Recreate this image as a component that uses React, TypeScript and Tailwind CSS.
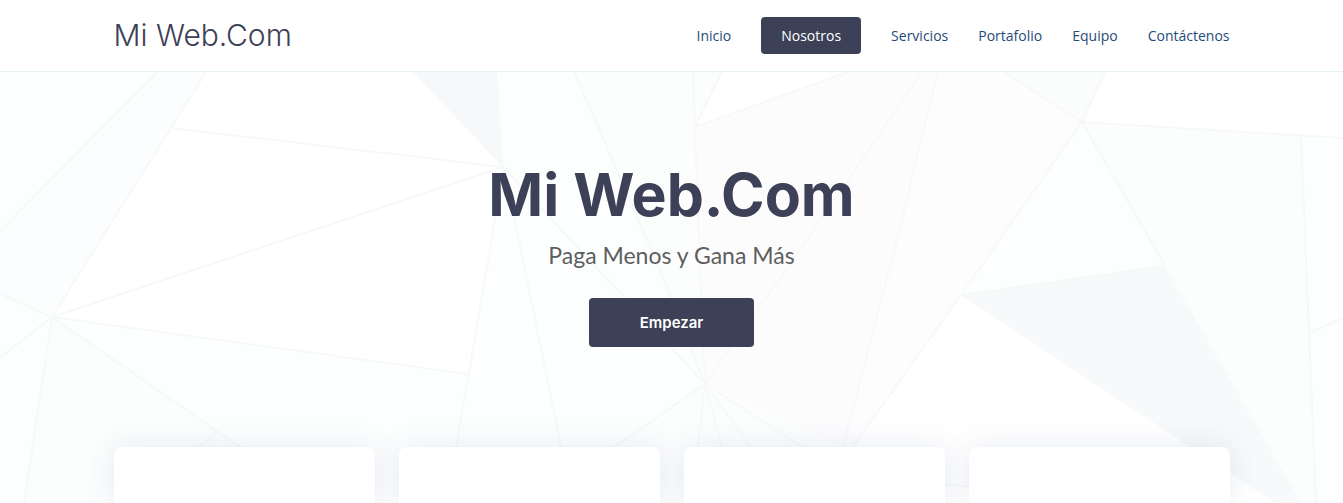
import React from "react";

const links = ["Inicio", "Nosotros", "Servicios", "Portafolio", "Equipo", "Contáctenos"];
const cards = ["uno", "dos", "tres", "cuatro"];

function PolygonBackdrop() {
  return (
    <svg
      aria-hidden="true"
      className="absolute inset-0 h-full w-full"
      viewBox="0 72 1343 431"
      preserveAspectRatio="xMidYMin slice"
    >
      <rect y="72" width="1343" height="431" fill="#fdfefe" />
      <g fill="#fcfdfd">
        <path d="M157 72H206L52 317L0 294V231Z" fill="#fcfdfe" />
        <path d="M574 72H722L695 127L705 384Z" />
        <path d="M695 127L848 72H938L843 447L705 384Z" fill="#fcfcfd" />
        <path d="M938 72H1004L1082 122L961 295L853 447H843Z" fill="#fdfdfe" />
        <path d="M1082 122L1301 135L1309 333L1316 503H1301L1165 266Z" />
        <path d="M1004 72H1105L1082 122Z" fill="#fbfcfc" />
        <path d="M52 317L240 447V503H24Z" />
        <path d="M705 384L843 447V503H561L614 447Z" />
      </g>
      <g fill="#ffffff">
        <path d="M206 72H413L503 167L171 128Z" />
        <path d="M171 128L503 167L490 250L468 374L52 317Z" />
        <path d="M695 127L722 72H848Z" />
        <path d="M1105 72H1343V138L1082 122Z" />
        <path d="M961 295L1275 503H815Z" />
      </g>
      <path d="M413 72H497L503 167Z" fill="#f7f8f9" />
      <path d="M961 295L1165 266L1301 503H1275Z" fill="#f7f9fa" />
      <g fill="none" stroke="#f7f9f9" strokeWidth="2">
        <path d="M157 72L0 231M206 72L171 128L52 317M171 128L503 167L52 317L468 374" />
        <path d="M0 294L52 317L0 358M52 317L24 503M52 317L240 447M218 432L199 447" />
        <path d="M503 167L490 250L456 447M503 167L521 250L561 447M503 167L705 384" />
        <path d="M574 72L654 255L705 384M693 72L695 127L699 250L705 384" />
        <path d="M722 72L695 127L848 72M922 72L800 250L705 384M938 72L896 244L843 447" />
        <path d="M705 384L614 447M705 384L698 447M705 384L722 447M705 384L751 447M705 384L802 447" />
        <path d="M1004 72L1082 122L1105 72M1082 122L1343 138M1082 122L961 295L853 447" />
        <path d="M1082 122L1165 266M961 295L1165 266" />
        <path d="M1301 135L1309 333L1316 503M1310 333L1343 318M945 484L969 487" />
      </g>
    </svg>
  );
}

export default function App() {
  return (
    <div className="flex min-h-screen flex-col bg-white font-['Open_Sans',sans-serif]">
      <header className="border-b border-[#e6f1f8] bg-white">
        <div className="mx-auto flex w-full max-w-[1140px] flex-wrap items-center justify-between px-3 py-[17px]">
          <a
            href="#inicio"
            className="font-['Inter',sans-serif] text-[30px] leading-[35px] font-light text-[#3d4157]"
          >
            Mi Web.Com
          </a>
          <nav aria-label="Principal">
            <ul className="flex flex-wrap items-center text-sm leading-[21px] text-[#1f4b77]">
              {links.map((label) => (
                <li key={label} className="ml-[30px]">
                  {label === "Nosotros" ? (
                    <a
                      href="#nosotros"
                      aria-current="page"
                      className="block rounded bg-[#3d4157] px-5 py-2 text-white"
                    >
                      {label}
                    </a>
                  ) : (
                    <a href={`#${label.toLowerCase()}`} className="block py-2">
                      {label}
                    </a>
                  )}
                </li>
              ))}
            </ul>
          </nav>
        </div>
      </header>

      <main className="relative flex flex-1 flex-col overflow-hidden bg-[#fdfefe]">
        <PolygonBackdrop />
        <section className="relative flex flex-col items-center px-3 pt-[87px] pb-[100px] text-center">
          <h1 className="font-['Inter',sans-serif] text-[59px] leading-[72px] font-bold text-[#3d4157]">
            Mi Web.Com
          </h1>
          <p className="mt-2 font-['Lato',sans-serif] text-[23px] leading-8 text-[#5e5e5e]">
            Paga Menos y Gana Más
          </p>
          <a
            href="#nosotros"
            className="mt-[27px] rounded bg-[#3d4157] px-[51px] py-[14px] font-['Inter',sans-serif] text-[15px] leading-[21px] font-semibold text-white"
          >
            Empezar
          </a>
        </section>
        <section
          aria-label="Servicios destacados"
          className="relative mx-auto grid w-full max-w-[1140px] flex-1 grid-cols-4 gap-6 px-3"
        >
          {cards.map((card) => (
            <article
              key={card}
              className="rounded-t-lg bg-white shadow-[0_0_29px_0_rgba(68,88,144,0.12)]"
            />
          ))}
        </section>
      </main>
    </div>
  );
}
